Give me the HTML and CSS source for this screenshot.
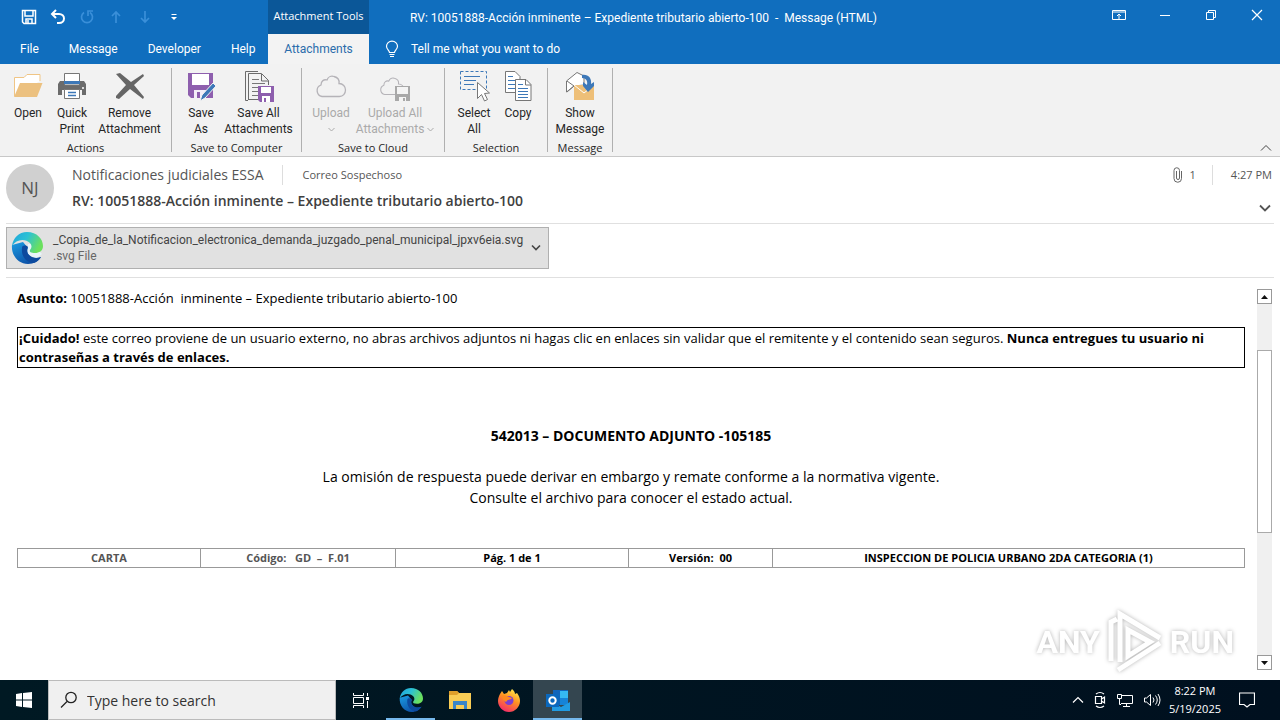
FILE: index.html
```html
<!DOCTYPE html>
<html lang="es">

<head>
    <meta charset="utf-8">
    <title>RV: 10051888-Acción inminente – Expediente tributario abierto-100</title>
    <link rel="stylesheet" href="styles.css">
</head>

<body>
    <svg class="defs" width="0" height="0">
        <defs>
            <linearGradient id="edgeTop" x1="0" y1="0" x2="1" y2="0.4">
                <stop offset="0" stop-color="#1fa4dd"/>
                <stop offset="0.5" stop-color="#2cc1d4"/>
                <stop offset="1" stop-color="#6be05e"/>
            </linearGradient>
            <linearGradient id="edgeLow" x1="0" y1="0" x2="0.6" y2="1">
                <stop offset="0" stop-color="#1b9de2"/>
                <stop offset="1" stop-color="#0c4fa6"/>
            </linearGradient>
            <linearGradient id="fox" x1="0.8" y1="0" x2="0.3" y2="1">
                <stop offset="0" stop-color="#fff04f"/>
                <stop offset="0.45" stop-color="#ff9321"/>
                <stop offset="1" stop-color="#f3296b"/>
            </linearGradient>
        </defs>
        <symbol id="edge" viewBox="0 0 32 32">
            <path d="M1 13C0 23 7 32 17 32c6 0 10-3 13-7-5 2-10 1-12-2-2-2-2-5-1-7l-5-6z" fill="url(#edgeLow)"/>
            <path d="M1 14C2 6 8 0 16 0c10 0 16 7 16 14 0 5-4 7-8 7-4 0-6-1-5-3 2-2 2-5 0-7-5-5-14-4-18 3z" fill="url(#edgeTop)"/>
            <path d="M11 16c-1 9 5 15 12 15 3-1 6-4 7-6-4 2-9 1-12-2-2-2-3-5-1-8-2-2-6-2-6 1z" fill="#0d4a9e"/>
        </symbol>
        <symbol id="cloud" viewBox="0 0 32 24">
            <path d="M7 22.500a6 6 0 0 1-1-11.500c0-4 3-6 6-5 1-3 4-4.500 7-3.500 4 1 5.500 4 5 7 4 0 6.500 3 6.500 6.500s-2.500 6.500-6 6.500z" fill="none" stroke="#b5b3b8" stroke-width="1.300"/>
        </symbol>
    </svg>

    <div class="window">
        <header class="titlebar">
            <div class="quick-access">
                <button aria-label="Save"><svg width="16" height="16" viewBox="0 0 16 16"><path d="M1.500 1.500h13v13H3L1.500 13zM4 2v5h8V2M5 14v-4h6v4M7 11v3" fill="none" stroke="#fff" stroke-width="1.500"/></svg></button>
                <button aria-label="Undo"><svg width="16" height="16" viewBox="0 0 16 16"><path d="M6 1L2 5l4 4M2 5h7c3 0 5 2 5 4.500S12 14 9 14H7" fill="none" stroke="#fff" stroke-width="2"/></svg></button>
                <button aria-label="Redo" disabled><svg width="16" height="16" viewBox="0 0 16 16"><path d="M5 3.500A5.500 5.500 0 1 0 11 3.500M9 7V2h5" fill="none" stroke="#3a8fd9" stroke-width="1.700"/></svg></button>
                <button aria-label="Previous item" disabled><svg width="16" height="16" viewBox="0 0 16 16"><path d="M8 14V3M4 7l4-4 4 4" fill="none" stroke="#3a8fd9" stroke-width="1.700"/></svg></button>
                <button aria-label="Next item" disabled><svg width="16" height="16" viewBox="0 0 16 16"><path d="M8 2v11M4 9l4 4 4-4" fill="none" stroke="#3a8fd9" stroke-width="1.700"/></svg></button>
                <button aria-label="Customize"><svg width="16" height="16" viewBox="0 0 16 16"><path d="M5.500 5.500h5" stroke="#fff"/><path d="M5 8h6l-3 3z" fill="#fff"/></svg></button>
            </div>
            <div class="context-title">Attachment Tools</div>
            <div class="window-title">RV: 10051888-Acción inminente – Expediente tributario abierto-100&nbsp; -&nbsp; Message (HTML)</div>
            <div class="window-buttons">
                <button aria-label="Ribbon options"><svg width="14" height="12" viewBox="0 0 14 12"><path d="M.5 1.500h13v9H.5zM.5 3h13M7 10V5M5 7l2-2 2 2" fill="none" stroke="#fff"/></svg></button>
                <button aria-label="Minimize"><svg width="12" height="12" viewBox="0 0 12 12"><path d="M1 6.500h10" stroke="#fff"/></svg></button>
                <button aria-label="Restore"><svg width="12" height="12" viewBox="0 0 12 12"><path d="M1.500 3.500h7v7h-7zM3.500 3V1.500h7v7H9" fill="none" stroke="#fff"/></svg></button>
                <button aria-label="Close"><svg width="12" height="12" viewBox="0 0 12 12"><path d="M1 1l10 10M11 1L1 11" stroke="#fff" stroke-width="1.200"/></svg></button>
            </div>
        </header>

        <nav class="tabs">
            <div class="tab-list">
                <button>File</button>
                <button>Message</button>
                <button>Developer</button>
                <button>Help</button>
            </div>
            <button class="active">Attachments</button>
            <button class="tell-me">
                <svg width="14" height="18" viewBox="0 0 14 18"><path d="M4.500 12.500c0-2-3-3-3-6.200a5.500 5.200 0 0 1 11 0c0 3.200-3 4.200-3 6.200zM4.500 14.500h5M5 16.500h4" fill="none" stroke="#fff" stroke-width="1.200"/></svg>
                Tell me what you want to do
            </button>
        </nav>

        <div class="ribbon">
            <section class="group">
                <div class="tools">
                    <button>
                        <svg width="32" height="32" viewBox="0 0 32 32"><path d="M2.500 26V7.500H12l3-3h13V11" fill="#fff" stroke="#f0c585"/><path d="M8 13h22.500L25 27H2z" fill="#ecc180"/></svg>
                        Open
                    </button>
                    <button>
                        <svg width="32" height="32" viewBox="0 0 32 32"><path d="M2 14l2-3h24l2 3v11H2z" fill="#6b6b6b"/><path d="M8.500 3.500h15V15h-15z" fill="#fff" stroke="#777"/><path d="M8 11h16v3H8z" fill="#3d78b8"/><path d="M6 20h20v6H6z" fill="#f2f2f2"/><path d="M8.500 19.500h15v9h-15z" fill="#fff" stroke="#777"/><path d="M12 22.500h8M12 25.500h8" stroke="#3d78b8" stroke-width="1.500"/><circle cx="27" cy="18" r="1" fill="#fff"/></svg>
                        Quick<br>Print
                    </button>
                    <button class="wide">
                        <svg width="32" height="32" viewBox="0 0 32 32"><path d="M2 4l4-1 11 9L29 4l1 2-10 9 10 12-1 2L16 19 5 29l-3-1v-2l10-11z" fill="#666"/></svg>
                        Remove<br>Attachment
                    </button>
                </div>
                <h2>Actions</h2>
            </section>
            <section class="group">
                <div class="tools">
                    <button>
                        <svg width="32" height="32" viewBox="0 0 32 32"><path d="M3 3h25v25H6l-3-3z" fill="#8e5fae"/><path d="M7 4h17v11H7z" fill="#fff"/><path d="M9 20h12v8H9z" fill="#f4eef8"/><path d="M12 22h3v6h-3z" fill="#8e5fae"/><path d="M15 31l2-6L28 13l3 3-11 12z" fill="#3d78b8" stroke="#f2f2f2"/></svg>
                        Save<br>As
                    </button>
                    <button class="wide">
                        <svg width="32" height="32" viewBox="0 0 32 32"><path d="M5 30.500H2.500v-29H15M5.500 30V3.500h13l7 7V15M18.500 4v7h7M5.500 29.500H15" fill="none" stroke="#6b6b6b"/><path d="M9 9.500h7M9 13.500h13M9 17.500h6M9 21.500h6M9 25.500h6" stroke="#777"/><path d="M15 16h16v16H17l-2-2z" fill="#8e5fae"/><path d="M18 17h10v6H18zM19 26h8v6h-8z" fill="#fff"/><path d="M21 28h2v4h-2z" fill="#8e5fae"/></svg>
                        Save All<br>Attachments
                    </button>
                </div>
                <h2>Save to Computer</h2>
            </section>
            <section class="group">
                <div class="tools">
                    <button class="upload" disabled>
                        <svg class="cloud" width="32" height="32" viewBox="0 0 32 32"><use href="#cloud" y="4" width="32" height="24"/></svg>
                        Upload<br><svg class="caret" width="7" height="5" viewBox="0 0 7 5"><path d="M.5 1l3 3 3-3" fill="none" stroke="#aaa"/></svg>
                    </button>
                    <button class="extra-wide" disabled>
                        <svg width="32" height="32" viewBox="0 0 32 32"><use href="#cloud" y="6" width="26" height="20"/><path d="M16 16h15v15H16z" fill="#a8a8a8"/><path d="M18 17h11v7H18zM20 27h7v4h-7z" fill="#f4f4f4"/><path d="M24 28h2v3h-2z" fill="#a8a8a8"/></svg>
                        Upload All<br>Attachments <svg class="caret" width="7" height="5" viewBox="0 0 7 5"><path d="M.5 1l3 3 3-3" fill="none" stroke="#aaa"/></svg>
                    </button>
                </div>
                <h2>Save to Cloud</h2>
            </section>
            <section class="group">
                <div class="tools">
                    <button>
                        <svg width="32" height="32" viewBox="0 0 32 32"><path d="M2.500 1.500h26v18h-26z" fill="none" stroke="#3d78b8" stroke-dasharray="3 2"/><path d="M6 6.500h16M6 10.500h12M6 14.500h10" stroke="#3d78b8"/><path d="M19.500 12.500v16l4-4 3 6.500 3-1.500-3-6 5-.5z" fill="#fff" stroke="#777"/></svg>
                        Select<br>All
                    </button>
                    <button>
                        <svg width="32" height="32" viewBox="0 0 32 32"><path d="M3.500 1.500H13l5 5v16H3.500z" fill="#fff" stroke="#777"/><path d="M6 6.500h5M6 10.500h7M6 14.500h7M6 18.500h7" stroke="#3d78b8"/><path d="M13.500 9.500H24l5 5v16H13.500z" fill="#fff" stroke="#777"/><path d="M23.500 10v5H29" fill="none" stroke="#777"/><path d="M16 14.500h5M16 18.500h10M16 21.500h10M16 24.500h10M16 27.500h10" stroke="#3d78b8"/></svg>
                        Copy
                    </button>
                </div>
                <h2>Selection</h2>
            </section>
            <section class="group">
                <div class="tools">
                    <button class="message">
                        <svg width="32" height="32" viewBox="0 0 32 32"><path d="M2.500 22V11L13 2.500 20 6v9l-10 1z" fill="#fff" stroke="#777"/><path d="M3 11l7 5-7 6" fill="none" stroke="#777"/><path d="M10 15h20v15H10z" fill="#eebf78"/><path d="M10 15l10 8 10-8" fill="none" stroke="#fff"/><path d="M18 5c6-1 10 3 9 9l3-2v4l-6 6-5-6v-4l4 3c1-4-1-7-5-7z" fill="#3d78b8"/></svg>
                        Show<br>Message
                    </button>
                </div>
                <h2>Message</h2>
            </section>
            <button class="collapse" aria-label="Collapse the ribbon"><svg width="12" height="8" viewBox="0 0 12 8"><path d="M1 6.500l5-5 5 5" fill="none" stroke="#444"/></svg></button>
        </div>

        <div class="mail-header">
            <div class="avatar">NJ</div>
            <div class="mail-info">
                <div class="sender-row">
                    <span class="sender">Notificaciones judiciales ESSA</span>
                    <span class="recipient">Correo Sospechoso</span>
                </div>
                <h1>RV: 10051888-Acción inminente – Expediente tributario abierto-100</h1>
            </div>
            <div class="mail-meta">
                <div class="meta-row">
                    <span class="clip"><svg width="10" height="16" viewBox="0 0 10 16"><path d="M3.500 4v7a1.500 1.500 0 0 0 3 0V3.500a2.500 2.500 0 0 0-5.500 0v8a3.500 3.500 0 0 0 7.500 0V4" fill="none" stroke="#666"/></svg>1</span>
                    <span class="time">4:27 PM</span>
                </div>
                <button aria-label="Expand header"><svg width="12" height="8" viewBox="0 0 12 8"><path d="M1 1.500l5 5 5-5" fill="none" stroke="#555" stroke-width="1.800"/></svg></button>
            </div>
        </div>

        <div class="attachments">
            <button class="attachment">
                <svg width="32" height="32"><path d="M17 12h4l10 10-6 5-8-5z" fill="#e8f4fa"/><use href="#edge"/></svg>
                <span class="file">
                    <span>_Copia_de_la_Notificacion_electronica_demanda_juzgado_penal_municipal_jpxv6eia.svg</span>
                    <span class="file-type">.svg File</span>
                </span>
                <svg width="10" height="8" viewBox="0 0 10 8"><path d="M1 1.500l4 4 4-4" fill="none" stroke="#444" stroke-width="1.600"/></svg>
            </button>
        </div>

        <main class="reader">
            <article class="mail-body">
                <p class="subject"><b>Asunto:</b> 10051888-Acción&nbsp; inminente – Expediente tributario abierto-100</p>
                <p class="warning"><b>¡Cuidado!</b> este correo proviene de un usuario externo, no abras archivos adjuntos ni hagas clic en enlaces sin validar que el remitente y el contenido sean seguros. <b>Nunca entregues tu usuario ni contraseñas a través de enlaces.</b></p>
                <h3>542013 – DOCUMENTO ADJUNTO -105185</h3>
                <p class="notice">La omisión de respuesta puede derivar en embargo y remate conforme a la normativa vigente.<br>Consulte el archivo para conocer el estado actual.</p>
                <table>
                    <colgroup>
                        <col class="col-type">
                        <col class="col-code">
                        <col class="col-page">
                        <col class="col-version">
                        <col>
                    </colgroup>
                    <tr>
                        <td class="soft">CARTA</td>
                        <td class="soft">Código:&nbsp;&nbsp; GD&nbsp; – &nbsp;F.01</td>
                        <td>Pág. 1 de 1</td>
                        <td>Versión:&nbsp; 00</td>
                        <td>INSPECCION DE POLICIA URBANO 2DA CATEGORIA (1)</td>
                    </tr>
                </table>
            </article>
            <div class="scrollbar">
                <button aria-label="Scroll up"><svg width="7" height="4" viewBox="0 0 7 4"><path d="M0 4h7L3.500 0z" fill="#111"/></svg></button>
                <div class="track"><div class="thumb"></div></div>
                <button aria-label="Scroll down"><svg width="7" height="4" viewBox="0 0 7 4"><path d="M0 0h7L3.500 4z" fill="#111"/></svg></button>
            </div>
            <div class="watermark">
                <span>ANY</span>
                <svg width="58" height="64" viewBox="0 0 58 64"><path d="M5 51V12l6-3M14 52V4l40 24M22 20v26l22-14zM12 60l42-27" fill="none" stroke="#fff" stroke-width="5"/></svg>
                <span>RUN</span>
            </div>
        </main>
    </div>

    <footer class="taskbar">
        <button class="start" aria-label="Start"><svg width="16" height="16" viewBox="0 0 16 16"><path d="M0 2l6-1v6.500H0zM7 1l9-1v7.500H7zM0 8.500h6V15l-6-1zM7 8.500h9V16l-9-1z" fill="#fff"/></svg></button>
        <div class="search">
            <label for="search"><svg width="18" height="18" viewBox="0 0 18 18"><circle cx="11" cy="6.500" r="5.200" fill="none" stroke="#222" stroke-width="1.300"/><path d="M7 10.500l-6 6" stroke="#222" stroke-width="1.300"/></svg></label>
            <input type="text" id="search" placeholder="Type here to search" aria-label="Search">
        </div>
        <button class="task-view" aria-label="Task View"><svg width="18" height="16" viewBox="0 0 18 16"><path d="M1.500 1v2.500h10V1M1.500 5.500h10v6h-10zM1.500 16v-2.500h10V16M15.500 1v3M15.500 9v7" fill="none" stroke="#fff"/><path d="M14 5h3v3h-3z" fill="#fff"/></svg></button>
        <button class="app running" aria-label="Edge"><svg width="24" height="24"><use href="#edge"/></svg></button>
        <button class="app" aria-label="File Explorer"><svg width="22" height="20" viewBox="0 0 22 20"><path d="M0 1h8l2 2h12v16H0z" fill="#f9cd55"/><path d="M0 1h8l2 2-2 2H0z" fill="#dfa02b"/><path d="M4 19v-8h14v8h-3v-4H7v4z" fill="#3a86c8"/></svg></button>
        <button class="app" aria-label="Firefox"><svg width="24" height="24" viewBox="0 0 24 24"><path d="M3 6l2-3 2 3 3-1 2-3 1 2 2-3c2 2 3 3 3 5l2-1c2 3 3 5 3 8 0 6-5 11-11 11S1 19 1 13c0-3 1-5 2-7z" fill="url(#fox)"/><circle cx="12" cy="12.500" r="4.500" fill="#7c3fd0"/><path d="M5 8c3-1 5 0 7 1l3 1c-1 2-3 1-4 2-1 0-1 1-2 2C7 13 5 11 5 8z" fill="#ff8a1f"/></svg></button>
        <button class="app running current" aria-label="Outlook"><svg width="26" height="24" viewBox="0 0 26 24"><path d="M8 2h15v15H8z" fill="#1065bb"/><path d="M15 3h8v7h-8z" fill="#35b8f1"/><path d="M15 10h8v7h-8z" fill="#1683d8"/><path d="M7 14l9 5 9-5v9H7z" fill="#219be2"/><path d="M1 6h13v13H1z" fill="#0a68bd"/><circle cx="7.500" cy="12.500" r="3.200" fill="none" stroke="#fff" stroke-width="2"/></svg></button>
        <div class="tray">
            <svg width="12" height="8" viewBox="0 0 12 8"><path d="M1 6.500l5-5 5 5" fill="none" stroke="#fff" stroke-width="1.200"/></svg>
            <svg width="14" height="18" viewBox="0 0 14 18"><path d="M2.500 5.500h6v7h-6zM8.500 8l3-2v6l-3-2M3 3q4-3 8 0M3 15q4 3 8 0" fill="none" stroke="#fff" stroke-width="1.200"/></svg>
            <svg width="18" height="16" viewBox="0 0 18 16"><path d="M5 3.500h11.500v8H5M10.500 11.500v3M7 14.500h7M1.500 2.500h4v4h-4zM3.500 6.500v6H5" fill="none" stroke="#fff"/></svg>
            <svg width="18" height="16" viewBox="0 0 18 16"><path d="M1.500 6v4h2l4 3.500v-11L3.500 6zM10 5.500q2 2.500 0 5M12.500 3.500q3.500 4.500 0 9M15 2q4 6 0 12" fill="none" stroke="#fff"/></svg>
        </div>
        <div class="clock">8:22 PM<br>5/19/2025</div>
        <button class="notifications" aria-label="Notifications"><svg width="16" height="16" viewBox="0 0 16 16"><path d="M.5 1h15v11.500H11L8 15l-3-2.500H.5z" fill="none" stroke="#fff" stroke-width="1.200"/></svg></button>
    </footer>
</body>

</html>
```
FILE: styles.css
```css
* {
    box-sizing: border-box;
}

body {
    margin: 0;
    height: 100vh;
    display: flex;
    flex-direction: column;
    overflow: hidden;
    background-color: #fff;
    color: #262626;
    font-family: "Open Sans", "Noto Sans", sans-serif;
    font-size: 12px;
    line-height: 16px;
}

button {
    padding: 0;
    border: 0;
    background: none;
    color: inherit;
    font: inherit;
}

svg {
    flex-shrink: 0;
}

h1, h2, h3, p {
    margin: 0;
}

.defs {
    position: absolute;
}

.window {
    flex: 1;
    min-height: 0;
    display: flex;
    flex-direction: column;
}

.window-title, .tabs, .tools, .attachment {
    font-family: Roboto, "Open Sans", sans-serif;
}

/* title bar */
.titlebar {
    display: flex;
    height: 34px;
    background-color: #106ebe;
    color: #fff;
}

.titlebar button {
    display: flex;
    align-items: center;
    justify-content: center;
}

.quick-access {
    display: flex;
    width: 268px;
    padding-left: 14px;
}

.quick-access button {
    width: 29px;
}

.context-title {
    width: 101px;
    background-color: #0b5798;
    font-size: 11px;
    line-height: 32px;
    text-align: center;
}

.window-title {
    flex: 1;
    padding-left: 41px;
    line-height: 36px;
    white-space: nowrap;
}

.window-buttons {
    display: flex;
}

.window-buttons button {
    width: 46px;
    height: 30px;
}

/* tabs */
.tabs {
    display: flex;
    height: 30px;
    background-color: #106ebe;
    color: #fff;
}

.tab-list {
    display: flex;
    gap: 30px;
    width: 268px;
    padding-left: 20px;
}

.tabs .active {
    width: 101px;
    background-color: #f3f3f3;
    color: #2a6cab;
}

.tell-me {
    display: flex;
    align-items: center;
    gap: 12px;
    padding-left: 16px;
}

/* ribbon */
.ribbon {
    display: flex;
    height: 93px;
    padding: 4px 0;
    background-color: #f2f2f2;
    border-bottom: 1px solid #c8c8c8;
}

.group {
    display: flex;
    flex-direction: column;
    justify-content: space-between;
    padding: 0 7px;
    border-right: 1px solid #b0b0b0;
}

.group:first-child {
    padding: 0 6px;
}

.tools {
    display: flex;
    align-items: flex-start;
}

.tools button {
    width: 44px;
    padding-top: 2px;
    text-align: center;
    white-space: nowrap;
}

.tools button > svg:first-child {
    display: block;
    margin: 0 auto 3px;
}

.tools .wide {
    width: 71px;
}

.tools .extra-wide {
    width: 84px;
}

.tools .message {
    width: 50px;
}

.tools button:disabled {
    color: #aaa;
}

.tools .caret {
    vertical-align: middle;
}

.group h2 {
    font-size: 11px;
    font-weight: normal;
    line-height: 9px;
    text-align: center;
}

.collapse {
    display: flex;
    align-self: flex-end;
    margin-left: auto;
    padding-right: 8px;
}

/* message header */
.mail-header {
    display: flex;
    height: 67px;
    margin: 0 6px;
    padding-top: 7px;
    border-bottom: 1px solid #e0e0e0;
    color: #555;
}

.avatar {
    width: 48px;
    height: 48px;
    border-radius: 50%;
    background-color: #d0d0d0;
    font-size: 17px;
    line-height: 48px;
    text-align: center;
}

.mail-info {
    flex: 1;
    padding-left: 18px;
}

.sender-row {
    display: flex;
    align-items: center;
    height: 22px;
}

.sender {
    padding-right: 18px;
    border-right: 1px solid #ddd;
    font-size: 14px;
    line-height: 20px;
}

.recipient {
    padding-left: 20px;
    font-size: 11px;
}

.mail-info h1 {
    padding-top: 5px;
    color: #404040;
    font-size: 14px;
    font-weight: 600;
    line-height: 20px;
}

.mail-meta {
    display: flex;
    flex-direction: column;
    align-items: flex-end;
    gap: 14px;
    font-size: 11px;
}

.meta-row {
    display: flex;
    align-items: center;
    height: 22px;
    padding-right: 2px;
}

.clip {
    display: flex;
    align-items: center;
    gap: 7px;
    padding-right: 16px;
    border-right: 1px solid #ddd;
    line-height: 20px;
}

.time {
    padding-left: 18px;
}

.mail-meta button {
    padding-right: 3px;
}

/* attachments */
.attachments {
    height: 54px;
    margin: 0 6px;
    padding-top: 3px;
    border-bottom: 1px solid #e0e0e0;
}

.attachment {
    display: flex;
    align-items: center;
    height: 42px;
    padding: 0 7px 0 4px;
    border: 1px solid #b0b0b0;
    background-color: #e1e1e1;
    color: #444;
    text-align: left;
}

.file {
    padding: 0 8px 0 10px;
}

.file span {
    display: block;
}

.file .file-type {
    color: #666;
}

/* message body */
.reader {
    position: relative;
    flex: 1;
    display: flex;
    min-height: 0;
    padding: 11px 8px 10px 17px;
}

.mail-body {
    flex: 1;
    padding-right: 12px;
    color: #000;
    font-size: 13px;
    line-height: 19px;
}

.warning {
    margin-top: 19px;
    padding: 1px 1px 0;
    border: 1px solid #000;
}

.mail-body h3 {
    margin-top: 58px;
    font-size: 14px;
    line-height: 20px;
    text-align: center;
}

.notice {
    margin-top: 20px;
    font-size: 14px;
    line-height: 21px;
    text-align: center;
}

table {
    width: 100%;
    margin-top: 40px;
    border-collapse: collapse;
    table-layout: fixed;
}

td {
    padding: 1px;
    border: 1px solid #999;
    font-size: 11px;
    font-weight: bold;
    line-height: 16px;
    text-align: center;
}

.soft {
    color: #555;
}

.col-type {
    width: 183px;
}

.col-code {
    width: 195px;
}

.col-page {
    width: 233px;
}

.col-version {
    width: 144px;
}

.scrollbar {
    display: flex;
    flex-direction: column;
    width: 15px;
    background-color: #f0f0f0;
}

.scrollbar button {
    display: flex;
    align-items: center;
    justify-content: center;
    height: 15px;
    border: 1px solid #999;
    background-color: #fff;
}

.track {
    flex: 1;
    padding-top: 46px;
}

.thumb {
    height: 60%;
    border: 1px solid #aaa;
    background-color: #fff;
}

.watermark {
    position: absolute;
    right: 46px;
    bottom: 6px;
    display: flex;
    align-items: center;
    gap: 6px;
    color: #fff;
    font-family: Roboto, sans-serif;
    font-size: 32px;
    font-weight: bold;
    line-height: 64px;
    filter: drop-shadow(0 0 2px rgba(0, 0, 0, 0.3));
}

/* taskbar */
.taskbar {
    display: flex;
    height: 40px;
    background: linear-gradient(90deg, #001923, #00101f);
    color: #fff;
}

.taskbar button {
    display: flex;
    align-items: center;
    justify-content: center;
    width: 48px;
}

.search {
    display: flex;
    align-items: center;
    gap: 9px;
    width: 288px;
    padding-left: 11px;
    border: 1px solid #bbb;
    background-color: #f0f0f0;
}

.search label {
    display: flex;
}

.search input {
    flex: 1;
    min-width: 0;
    padding: 0;
    border: 0;
    background: none;
    font-family: inherit;
    font-size: 14px;
}

.search input::placeholder {
    color: #333;
    opacity: 1;
}

.taskbar .app {
    width: 49px;
    border-bottom: 2px solid transparent;
    padding-top: 2px;
}

.taskbar .running {
    border-bottom-color: #76b9ed;
}

.taskbar .current {
    background-color: #344650;
}

.taskbar .task-view {
    width: 50px;
}

.tray {
    display: flex;
    align-items: center;
    gap: 9px;
    margin-left: auto;
    padding-right: 8px;
}

.clock {
    padding-top: 2px;
    font-size: 11px;
    line-height: 18px;
    text-align: center;
}

.taskbar .notifications {
    width: 52px;
    margin-right: 7px;
}
```
